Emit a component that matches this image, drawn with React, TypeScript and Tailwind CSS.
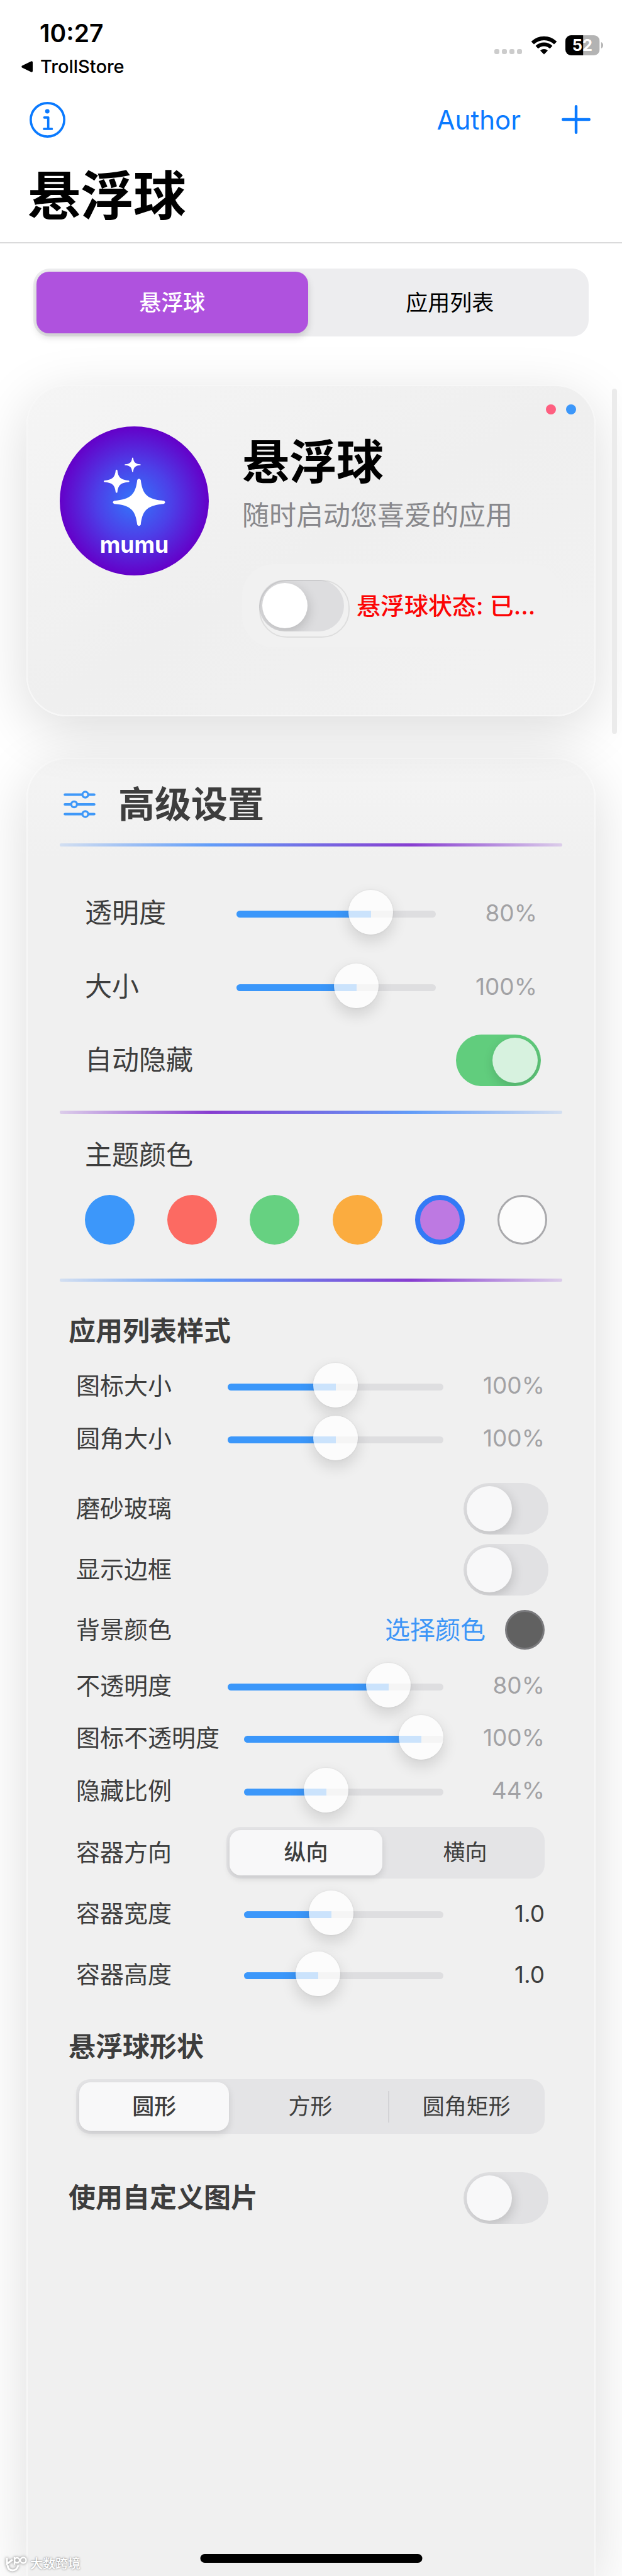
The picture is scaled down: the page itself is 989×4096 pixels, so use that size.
import React, { useState } from "react";

const STAR =
  "M-3 -39 Q0 -43 3 -39 C6 -14 14 -5 43 -2.8 Q48 0 43 2.8 C14 5 6 14 3 39 Q0 43 -3 39 C-6 14 -14 5 -43 2.8 Q-48 0 -43 -2.8 C-14 -5 -6 -14 -3 -39 Z";

function WifiIcon() {
  return (
    <svg viewBox="0 0 44 32" className="h-[30px] w-10" aria-hidden="true">
      <g fill="none" stroke="#000">
        <path d="M2 12 A28.3 28.3 0 0 1 42 12" strokeWidth="6.8" />
        <path d="M9.5 19.5 A17.7 17.7 0 0 1 34.5 19.5" strokeWidth="6.4" />
      </g>
      <path d="M22 32 L15.4 25.4 A9.3 9.3 0 0 1 28.6 25.4 Z" />
    </svg>
  );
}

function BatteryIcon() {
  return (
    <svg viewBox="0 0 66 35" className="h-8 w-[60px]" role="img">
      <defs>
        <clipPath id="battery-body">
          <rect width="60" height="35" rx="10" />
        </clipPath>
      </defs>
      <g clipPath="url(#battery-body)">
        <rect width="60" height="35" fill="#b3b3b3" />
        <rect width="31" height="35" fill="#000" />
      </g>
      <path d="M62.5 12 Q66 13.5 66 17.5 Q66 21.5 62.5 23 Z" fill="#b3b3b3" />
      <text x="29.5" y="27.5" textAnchor="middle" fill="#fff" fontSize="28" fontWeight="700">
        52
      </text>
    </svg>
  );
}

function InfoIcon() {
  return (
    <svg viewBox="0 0 62 62" className="size-[57px]" fill="none" stroke="#0a7aff" strokeWidth="4" strokeLinecap="round" strokeLinejoin="round">
      <circle cx="31" cy="31" r="29" />
      <circle cx="30.7" cy="16.3" r="3.8" fill="#0a7aff" stroke="none" />
      <path d="M25.5 27 H32.3 V46.5 M25 46.7 H38.5" />
    </svg>
  );
}

function Logo() {
  return (
    <svg viewBox="0 0 259 259" className="size-[237px] shrink-0" role="img">
      <defs>
        <radialGradient id="ball">
          <stop offset="0" stopColor="#3377fc" />
          <stop offset="0.5" stopColor="#4c40e8" />
          <stop offset="1" stopColor="#6400c8" />
        </radialGradient>
      </defs>
      <circle cx="129.5" cy="129.5" r="129.5" fill="url(#ball)" />
      <g fill="#fff">
        <path d={STAR} transform="translate(137.7 132)" />
        <path d={STAR} transform="translate(98.7 95.3) scale(0.49)" />
        <path d={STAR} transform="translate(126.7 66.7) scale(0.31)" />
        <text x="129.5" y="219.5" textAnchor="middle" fontSize="39" fontWeight="700">
          mumu
        </text>
      </g>
    </svg>
  );
}

function SlidersIcon() {
  return (
    <svg viewBox="0 0 56 48" className="h-11 w-[51px]" fill="none" stroke="#3f98f8" aria-hidden="true">
      <g strokeWidth="4.6" strokeLinecap="round">
        <path d="M2.5 7 H32 M44 7 H53.5" />
        <path d="M2.5 24 H12 M25 24 H53.5" />
        <path d="M2.5 41 H32 M44 41 H53.5" />
      </g>
      <g strokeWidth="3.6">
        <circle cx="38" cy="7" r="5" />
        <circle cx="18.5" cy="24" r="5" />
        <circle cx="38" cy="41" r="5" />
      </g>
    </svg>
  );
}

function Switch({ id, on = false, bright = false }: { id: string; on?: boolean; bright?: boolean }) {
  const [checked, setChecked] = useState(on);
  const knob = bright ? "bg-[#dddddf] before:bg-white" : "bg-[#e1e1e3] before:bg-[#f8f8f9]";
  return (
    <input
      id={id}
      type="checkbox"
      role="switch"
      checked={checked}
      onChange={(e) => setChecked(e.target.checked)}
      className={`h-[82px] w-[135px] shrink-0 appearance-none overflow-hidden rounded-full p-[5px] before:block before:size-[72px] before:rounded-full before:shadow-[2px_6px_18px_rgba(0,0,0,0.16)] checked:bg-[#61cd7d] checked:before:translate-x-[53px] checked:before:bg-[#d7f2df] ${knob}`}
    />
  );
}

type SliderRowProps = { id: string; label: string; at: number; value: string; wide?: boolean; big?: boolean; dark?: boolean; height?: string };

function SliderRow({ id, label, at, value, wide, big, dark, height = "h-[84px]" }: SliderRowProps) {
  const [pos, setPos] = useState(at);
  return (
    <div className={`flex items-center ${height}`}>
      <label htmlFor={id} className={`shrink-0 ${wide ? "w-[267px]" : "w-[241px]"} ${big ? "text-[43px]" : "text-[38px]"}`}>
        {label}
      </label>
      <div className="flex min-w-0 flex-1 pt-1">
        <input
          id={id}
          type="range"
          min={0}
          max={100}
          step={0.1}
          value={pos}
          onChange={(e) => setPos(Number(e.target.value))}
          style={{ "--fill": `calc(36px + (100% - 71px) * ${pos / 100})` } as React.CSSProperties}
          className="h-[71px] w-full appearance-none bg-transparent [&::-webkit-slider-runnable-track]:h-[11px] [&::-webkit-slider-runnable-track]:rounded-full [&::-webkit-slider-runnable-track]:bg-[linear-gradient(to_right,#3b97fa_var(--fill),#dedee0_var(--fill))] [&::-webkit-slider-thumb]:mt-[-33px] [&::-webkit-slider-thumb]:size-[71px] [&::-webkit-slider-thumb]:appearance-none [&::-webkit-slider-thumb]:rounded-full [&::-webkit-slider-thumb]:bg-[#fcfcfc]/75 [&::-webkit-slider-thumb]:bg-[linear-gradient(#fcfcfc,#fcfcfc_33px,transparent_33px,transparent_44px,#fcfcfc_44px)] [&::-webkit-slider-thumb]:shadow-[0_10px_24px_rgba(0,0,0,0.14),0_0_3px_rgba(0,0,0,0.08)]"
        />
      </div>
      <output htmlFor={id} className={`w-[161px] shrink-0 text-right text-[37px] ${dark ? "" : "text-[#a2a2a5]"}`}>
        {value}
      </output>
    </div>
  );
}

function SwitchRow({ id, label }: { id: string; label: string }) {
  return (
    <div className="-mr-1.5 flex h-[97px] items-center justify-between text-[38px]">
      <label htmlFor={id}>{label}</label>
      <Switch id={id} />
    </div>
  );
}

function Segmented({ label, options, className }: { label: string; options: string[]; className: string }) {
  const [active, setActive] = useState(0);
  return (
    <div role="group" aria-label={label} className={`flex gap-1 rounded-[22px] bg-[#e4e4e6] p-[5px] text-[35px] ${className}`}>
      {options.map((option, i) => (
        <React.Fragment key={option}>
          {i > 0 && <span className={`my-auto h-[50px] w-[2px] ${i - 1 === active || i === active ? "" : "bg-[#d3d3d6]"}`} />}
          <button
            type="button"
            aria-pressed={i === active}
            onClick={() => setActive(i)}
            className={`flex flex-1 items-center justify-center rounded-[18px] ${i === active ? "bg-[#f8f8f9] font-medium shadow-[0_5px_12px_rgba(0,0,0,0.12)]" : ""}`}
          >
            {option}
          </button>
        </React.Fragment>
      ))}
    </div>
  );
}

function Rule({ reverse, className }: { reverse?: boolean; className: string }) {
  return (
    <div
      className={`h-[5px] rounded-[2px] ${reverse ? "bg-[linear-gradient(to_right,#dccdea,#873dd0_30%,#619cf8_70%,#d3dff1)]" : "bg-[linear-gradient(to_right,#d3dff1,#619cf8_30%,#873dd0_70%,#dccdea)]"} ${className}`}
    />
  );
}

const SWATCHES = [
  { name: "蓝色", style: "bg-[#3c97fa]" },
  { name: "红色", style: "bg-[#fc6a62]" },
  { name: "绿色", style: "bg-[#66d181]" },
  { name: "橙色", style: "bg-[#fbac3f]" },
  { name: "紫色", style: "bg-[#bd79e2] border-8 border-[#337af6]" },
  { name: "白色", style: "bg-[#fcfcfc] border-[3px] border-[#a9a9ac]" },
];

const TABS = ["悬浮球", "应用列表"];

export default function App() {
  const [tab, setTab] = useState(0);
  return (
    <div className="relative flex min-h-screen flex-col overflow-hidden bg-white font-['Inter','Noto_Sans_CJK_SC',sans-serif] text-[#3d3d3d]">
      <header className="border-b-2 border-[#dadadb] bg-white pb-[7px] text-black">
        <div className="flex h-[134px] justify-between">
          <div className="pt-[30px] pl-[34px]">
            <div className="pl-[29px] text-[39px] leading-[46px] font-semibold">10:27</div>
            <a href="#trollstore" className="mt-3 flex items-center gap-3 text-[29px] leading-9 font-medium">
              <svg viewBox="0 0 18 18" className="size-[18px]" aria-hidden="true">
                <path d="M1 7.6 Q-0.5 9 1 10.4 L15.5 17.6 Q18 18 18 16 V2 Q18 0 15.5 0.4 Z" />
              </svg>
              TrollStore
            </a>
          </div>
          <div className="flex items-start pt-14 pr-[30px]">
            <div className="mt-[22px] flex gap-1">
              <span className="size-2 rounded-[3px] bg-[#cccccc]" />
              <span className="size-2 rounded-[3px] bg-[#cccccc]" />
              <span className="size-2 rounded-[3px] bg-[#cccccc]" />
              <span className="size-2 rounded-[3px] bg-[#cccccc]" />
            </div>
            <div className="ml-[15px] pt-px">
              <WifiIcon />
            </div>
            <div className="ml-3.5">
              <BatteryIcon />
            </div>
          </div>
        </div>
        <nav className="flex h-28 items-center justify-between pr-[50px] pl-[47px] text-[#0a7aff]">
          <button type="button" aria-label="信息">
            <InfoIcon />
          </button>
          <div className="flex items-center gap-[65px]">
            <a href="#author" className="text-[42px]">Author</a>
            <button type="button" aria-label="添加">
              <svg viewBox="0 0 46 46" className="size-[46px]" stroke="#0a7aff" strokeWidth="4.4" strokeLinecap="round">
                <path d="M23 2.2 V43.8 M2.2 23 H43.8" />
              </svg>
            </button>
          </div>
        </nav>
        <h1 className="pl-11 text-[84px] leading-[132px] font-bold">悬浮球</h1>
      </header>

      <div role="tablist" className="mx-[53px] mt-10 flex h-[108px] gap-2.5 rounded-[26px] bg-[#ededef] p-[5px] text-[35px] text-black">
        {TABS.map((name, i) => (
          <button
            key={name}
            type="button"
            role="tab"
            aria-selected={tab === i}
            onClick={() => setTab(i)}
            className={`flex-1 rounded-[20px] ${tab === i ? "bg-[#af52de] font-medium text-white shadow-[0_6px_12px_rgba(0,0,0,0.15)]" : ""}`}
          >
            {name}
          </button>
        ))}
      </div>

      <section className="relative mx-[42px] mt-[77px] flex h-[527px] gap-[53px] rounded-[64px] border-2 border-[#f7f7f7] bg-linear-to-br from-[#f5f5f5] via-[#efefef] to-[#f2f2f2] px-[51px] pt-16 shadow-[0_22px_90px_rgba(0,0,0,0.14)]">
        <div className="absolute top-[29px] right-[29px] flex gap-4">
          <span className="size-4 rounded-full bg-[#fe5f80]" />
          <span className="size-4 rounded-full bg-[#3c97fa]" />
        </div>
        <Logo />
        <div className="min-w-0 flex-1 pt-3">
          <h2 className="text-[75px] leading-[90px] font-bold text-black">悬浮球</h2>
          <p className="mt-[9px] text-[43px] leading-[60px] text-[#88888c]">随时启动您喜爱的应用</p>
          <div className="mt-12 flex h-[132px] items-start gap-[11px] rounded-[50px] bg-[#f1f1f1] pt-[25px] pl-[27px]">
            <div className="relative h-[92px] w-36 shrink-0 rounded-[46px]">
              <Switch id="ball-state" bright />
              <span className="pointer-events-none absolute inset-0 rounded-[44px] border-2 border-black/8" />
            </div>
            <label htmlFor="ball-state" className="text-[38px] leading-[82px] font-medium whitespace-nowrap text-[#fc0505]">
              悬浮球状态: 已…
            </label>
          </div>
        </div>
      </section>

      <section className="mx-[42px] mt-[66px] flex-1 rounded-t-[64px] border-2 border-b-0 border-[#f8f8f8] bg-linear-to-b from-[#f4f4f4] to-[#f0f0f0] to-[160px] px-[51px] pt-7 shadow-[0_22px_90px_rgba(0,0,0,0.14)]">
        <div className="flex h-[88px] items-center gap-9 pl-1.5">
          <SlidersIcon />
          <h2 className="text-[58px] font-bold">高级设置</h2>
        </div>
        <Rule className="mt-[18px]" />

        <div className="mt-[47px] px-10">
          <SliderRow id="opacity" label="透明度" at={72.3} value="80%" big height="h-[117px]" />
          <SliderRow id="size" label="大小" at={63} value="100%" big height="h-[117px]" />
          <div className="-mr-1.5 flex h-[117px] items-center justify-between text-[43px]">
            <label htmlFor="auto-hide">自动隐藏</label>
            <Switch id="auto-hide" on />
          </div>
        </div>
        <Rule reverse className="mt-[22px]" />

        <div className="mt-[35px] pr-6 pl-10">
          <h3 className="text-[43px] leading-[60px]">主题颜色</h3>
          <div className="mt-[34px] flex justify-between">
            {SWATCHES.map((swatch) => (
              <button key={swatch.name} type="button" aria-label={swatch.name} className={`size-[79px] rounded-full ${swatch.style}`} />
            ))}
          </div>
        </div>
        <Rule className="mt-[54px]" />

        <h3 className="mt-12 pl-3.5 text-[43px] leading-[60px] font-semibold">应用列表样式</h3>
        <div className="mt-[15px] pr-7 pl-[26px]">
          <SliderRow id="icon-size" label="图标大小" at={50} value="100%" />
          <SliderRow id="corner" label="圆角大小" at={50} value="100%" />
          <div className="mt-[21px]">
            <SwitchRow id="glass" label="磨砂玻璃" />
            <SwitchRow id="border" label="显示边框" />
          </div>
          <div className="flex h-[95px] items-center text-[38px]">
            <span className="flex-1">背景颜色</span>
            <button type="button" className="text-[40px] text-[#3d96f7]">选择颜色</button>
            <span className="ml-[31px] size-[63px] rounded-full border-[3px] border-[#7a7a7d] bg-[#616161]" />
          </div>
          <SliderRow id="bg-opacity" label="不透明度" at={81} value="80%" height="h-[82px]" />
          <SliderRow id="icon-opacity" label="图标不透明度" at={100} value="100%" wide />
          <SliderRow id="hide-ratio" label="隐藏比例" at={38.5} value="44%" wide />
          <div className="mt-2 flex h-[97px] items-center text-[38px]">
            <span className="w-[239px] shrink-0">容器方向</span>
            <Segmented label="容器方向" options={["纵向", "横向"]} className="h-[82px] flex-1" />
          </div>
          <SliderRow id="box-width" label="容器宽度" at={41.7} value="1.0" wide dark height="h-[97px]" />
          <SliderRow id="box-height" label="容器高度" at={33.3} value="1.0" wide dark height="h-[97px]" />
        </div>

        <h3 className="mt-9 pl-3.5 text-[43px] leading-[60px] font-semibold">悬浮球形状</h3>
        <Segmented label="悬浮球形状" options={["圆形", "方形", "圆角矩形"]} className="mt-[22px] mr-7 ml-[26px] h-[87px]" />

        <div className="mt-[53px] mr-[22px] ml-3.5 flex h-[97px] items-center justify-between">
          <label htmlFor="custom-image" className="text-[43px] font-semibold">使用自定义图片</label>
          <Switch id="custom-image" />
        </div>
      </section>

      <div className="absolute top-[618px] right-2 h-[549px] w-2 rounded-full bg-[#ebebeb]" />
      <div className="absolute bottom-[21px] left-1/2 h-3.5 w-[353px] -translate-x-1/2 rounded-full bg-black" />
      <div className="absolute bottom-1.5 left-2 flex items-center gap-1 text-[20px] leading-6 font-medium text-white [text-shadow:0_0_3px_#777]">
        <svg viewBox="0 0 36 26" className="h-[26px] w-9 drop-shadow-[0_0_2px_#777]" fill="none" stroke="#fff" strokeWidth="3" aria-hidden="true">
          <path d="M3 3 V15 M12 6 L4 12 M4 15 Q5 23 12 23 Q19 23 21 15" />
          <circle cx="19" cy="7" r="4" strokeWidth="2.4" />
          <path d="M15 2 V14" strokeWidth="2.4" />
          <circle cx="29" cy="7" r="4.5" strokeWidth="2.4" />
        </svg>
        大数跨境
      </div>
    </div>
  );
}
